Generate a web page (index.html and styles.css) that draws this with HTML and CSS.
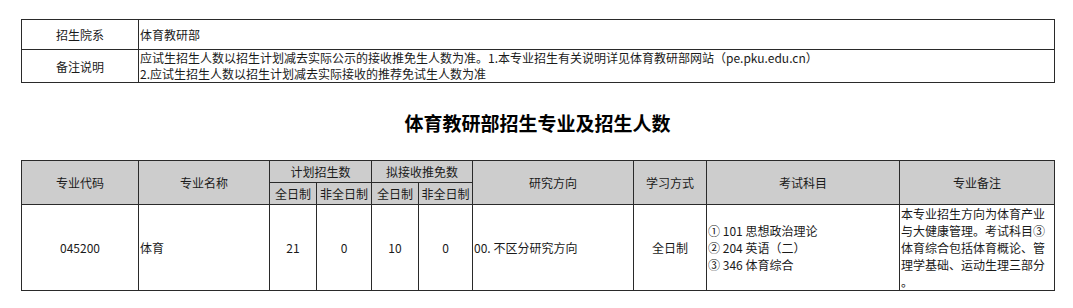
FILE: index.html
```html
<!DOCTYPE html>
<html lang="zh-CN">
<head>
<meta charset="utf-8">
<title>体育教研部招生专业及招生人数</title>
<link rel="stylesheet" href="styles.css">
</head>
<body>
<div class="page">
  <table class="info">
    <colgroup><col class="c-label"><col class="c-value"></colgroup>
    <tr class="r1">
      <td class="label">招生院系</td>
      <td class="value">体育教研部</td>
    </tr>
    <tr class="r2">
      <td class="label">备注说明</td>
      <td class="value">应试生招生人数以招生计划减去实际公示的接收推免生人数为准。1.本专业招生有关说明详见体育教研部网站（pe.pku.edu.cn）<br>2.应试生招生人数以招生计划减去实际接收的推荐免试生人数为准</td>
    </tr>
  </table>

  <h1 class="title">体育教研部招生专业及招生人数</h1>

  <table class="majors">
    <colgroup>
      <col class="w-code"><col class="w-name"><col class="w-n1"><col class="w-n2"><col class="w-n3"><col class="w-n4"><col class="w-dir"><col class="w-mode"><col class="w-exam"><col class="w-note">
    </colgroup>
    <thead>
      <tr class="h1">
        <th rowspan="2">专业代码</th>
        <th rowspan="2">专业名称</th>
        <th colspan="2">计划招生数</th>
        <th colspan="2">拟接收推免数</th>
        <th rowspan="2">研究方向</th>
        <th rowspan="2">学习方式</th>
        <th rowspan="2">考试科目</th>
        <th rowspan="2">专业备注</th>
      </tr>
      <tr class="h2">
        <th>全日制</th>
        <th>非全日制</th>
        <th>全日制</th>
        <th>非全日制</th>
      </tr>
    </thead>
    <tbody>
      <tr class="data">
        <td class="center">045200</td>
        <td class="left">体育</td>
        <td class="center">21</td>
        <td class="center">0</td>
        <td class="center">10</td>
        <td class="center">0</td>
        <td class="left">00. 不区分研究方向</td>
        <td class="center">全日制</td>
        <td class="left">① 101 思想政治理论<br>② 204 英语（二）<br>③ 346 体育综合</td>
        <td class="left top note">本专业招生方向为体育产业与大健康管理。考试科目③体育综合包括体育概论、管理学基础、运动生理三部分。</td>
      </tr>
    </tbody>
  </table>
</div>
</body>
</html>
```

FILE: styles.css
```css
html, body {
  margin: 0;
  padding: 0;
  background: #ffffff;
}

body {
  font-family: "Noto Sans CJK SC", "Noto Sans", sans-serif;
  font-size: 12px;
  color: #1a1a1a;
}

.page {
  padding: 19px 0 0 21px;
  width: 1033px;
}

table {
  border-collapse: collapse;
  table-layout: fixed;
  width: 1033px;
}

td, th {
  border: 1px solid #2a2a2a;
  padding: 0 2px;
  font-weight: normal;
  overflow: hidden;
}

.info {
  border: 1px solid #555555;
}

.c-label { width: 117px; }
.c-value { width: 916px; }

.w-code { width: 117px; }
.w-name { width: 131px; }
.w-n1 { width: 47px; }
.w-n2 { width: 55px; }
.w-n3 { width: 47px; }
.w-n4 { width: 54px; }
.w-dir { width: 161px; }
.w-mode { width: 73px; }
.w-exam { width: 193px; }
.w-note { width: 155px; }

.info .label {
  text-align: center;
  vertical-align: middle;
}

.info .value {
  text-align: left;
  line-height: 16px;
  padding-left: 1px;
}

.info .r1 td { height: 29px; }
.info .r2 td { height: 32px; }

.title {
  margin: 26px 0 23px 0;
  text-align: center;
  font-size: 19px;
  line-height: 28px;
  font-weight: bold;
  color: #000000;
}

.majors {
  border: 1px solid #555555;
}

.majors th {
  background: #cdcdcd;
  text-align: center;
  vertical-align: middle;
  line-height: 16px;
  padding: 0;
}

.majors .h1 th { height: 21px; }
.majors .h2 th { height: 21px; }

.majors .data td {
  height: 84px;
  line-height: 17px;
  vertical-align: middle;
}

.majors .center { text-align: center; }
.majors .left { text-align: left; padding-left: 1px; }
.majors .top { vertical-align: top; }
.majors .note { line-break: anywhere; }
```
